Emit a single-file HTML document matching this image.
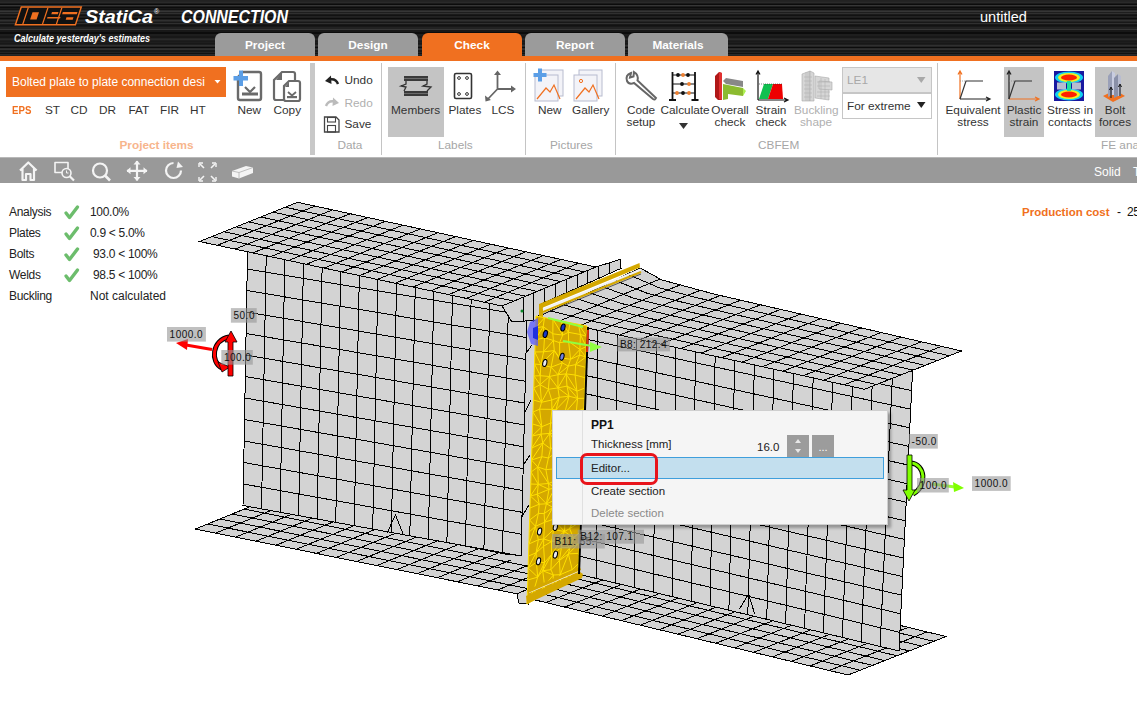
<!DOCTYPE html>
<html><head><meta charset="utf-8">
<style>
*{margin:0;padding:0;box-sizing:border-box}
html,body{width:1137px;height:711px;overflow:hidden;background:#fff;font-family:"Liberation Sans",sans-serif;position:relative}
.a{position:absolute;white-space:nowrap}
#hdr{left:0;top:0;width:1137px;height:56px;background:linear-gradient(180deg,#222222 0px,#222222 1px,#242424 1px,#242424 2px,#2a2a2a 2px,#2a2a2a 3px,#1a1a1a 3px,#1a1a1a 4px,#0c0c0c 4px,#0c0c0c 5px,#363636 5px,#363636 6px,#1e1e1e 6px,#1e1e1e 7px,#0c0c0c 7px,#0c0c0c 8px,#181818 8px,#181818 9px,#121212 9px,#121212 10px,#2a2a2a 10px,#2a2a2a 11px,#363636 11px,#363636 12px,#1e1e1e 12px,#1e1e1e 13px,#303030 13px,#303030 14px,#1a1a1a 14px,#1a1a1a 15px,#121212 15px,#121212 16px,#222222 16px,#222222 17px,#1e1e1e 17px,#1e1e1e 18px,#0c0c0c 18px,#0c0c0c 19px,#1e1e1e 19px,#1e1e1e 20px,#303030 20px,#303030 21px,#242424 21px,#242424 22px,#181818 22px,#181818 23px,#303030 23px,#303030 24px,#181818 24px,#181818 25px,#121212 25px,#121212 26px,#181818 26px,#181818 27px,#222222 27px,#222222 28px,#222222 28px,#222222 29px,#363636 29px,#363636 30px,#181818 30px,#181818 31px,#181818 31px,#181818 32px,#0c0c0c 32px,#0c0c0c 33px,#0c0c0c 33px,#0c0c0c 34px,#1e1e1e 34px,#1e1e1e 35px,#1e1e1e 35px,#1e1e1e 36px,#181818 36px,#181818 37px,#181818 37px,#181818 38px,#242424 38px,#242424 39px,#2a2a2a 39px,#2a2a2a 40px,#1e1e1e 40px,#1e1e1e 41px,#1a1a1a 41px,#1a1a1a 42px,#1e1e1e 42px,#1e1e1e 43px,#181818 43px,#181818 44px,#1e1e1e 44px,#1e1e1e 45px,#303030 45px,#303030 46px,#242424 46px,#242424 47px,#0c0c0c 47px,#0c0c0c 48px,#2a2a2a 48px,#2a2a2a 49px,#303030 49px,#303030 50px,#181818 50px,#181818 51px,#181818 51px,#181818 52px,#242424 52px,#242424 53px,#121212 53px,#121212 54px,#2a2a2a 54px,#2a2a2a 55px,#242424 55px,#242424 56px)}
#obar{left:0;top:56px;width:1137px;height:5px;background:#f07020}
.tab{top:33px;height:23px;width:100px;background:#9b9b9b;border-radius:6px 6px 0 0;color:#fff;font-weight:bold;font-size:11.8px;text-align:center;line-height:25px}
#rib{left:0;top:61px;width:1137px;height:96px;background:#fff}
#rbot{left:0;top:157px;width:1137px;height:1px;background:#b8b8b8;z-index:1}
#tb{left:0;top:157px;width:1137px;height:26px;background:#999}
.t{font-size:12.5px;color:#333;line-height:12px}
.c{text-align:center}
.grp{font-size:12.5px;color:#a6a6a6}
.sep{width:1px;background:#c4c4c4;top:63px;height:92px}
.info{font-size:12px;line-height:13px;color:#222;letter-spacing:-0.3px}
.hl{background:#c4c4c4}
.m{font-size:11.5px;line-height:13px;color:#222}
.r{font-size:11.8px;line-height:13px;color:#333}
</style></head><body>
<div id="hdr" class="a"></div>
<svg class="a" style="left:0;top:0" width="300" height="50">
 <polygon points="20.8,6.2 82.3,6.2 75.9,25.5 14.4,25.5" fill="#f07020"/>
 <polygon points="21.8,7.7 80.3,7.7 74.9,24.0 16.4,24.0" fill="#111"/>
 <polygon points="27.6,7.7 28.9,7.7 23.5,24.0 22.2,24.0" fill="#f07020"/>
 <polygon points="47.3,7.7 48.6,7.7 43.2,24.0 41.9,24.0" fill="#f07020"/>
 <polygon points="61.2,7.7 62.5,7.7 57.1,24.0 55.8,24.0" fill="#f07020"/>
 <polygon points="32.5,12.2 39.0,12.2 36.6,19.5 30.1,19.5" fill="#f07020"/>
 <polygon points="52.0,12.0 58.5,12.0 57.8,14.2 51.3,14.2" fill="#f07020"/>
 <polygon points="47.5,17.0 60.5,17.0 60.0,18.5 47.0,18.5" fill="#f07020"/>
 <polygon points="62.8,12.0 77.5,12.0 76.8,14.2 62.1,14.2" fill="#f07020"/>
 <polygon points="66.5,17.3 73.5,17.3 72.7,19.8 65.7,19.8" fill="#f07020"/>
 <text x="85" y="22.5" font-family="Liberation Sans" font-weight="bold" font-style="italic" font-size="18" fill="#fff" textLength="68" lengthAdjust="spacingAndGlyphs">StatiCa</text>
 <text x="154" y="14" font-family="Liberation Sans" font-size="7" fill="#fff">®</text>
 <text x="181" y="23" font-family="Liberation Sans" font-style="italic" font-weight="bold" font-size="18" fill="#fff" textLength="107" lengthAdjust="spacingAndGlyphs">CONNECTION</text>
 <text x="14" y="42" font-family="Liberation Sans" font-style="italic" font-weight="bold" font-size="10" fill="#fff" textLength="136" lengthAdjust="spacingAndGlyphs">Calculate yesterday's estimates</text>
</svg>
<div id="obar" class="a"></div>
<div class="a tab" style="left:215px">Project</div>
<div class="a tab" style="left:318px">Design</div>
<div class="a tab" style="left:422px;background:#f07020">Check</div>
<div class="a tab" style="left:525px">Report</div>
<div class="a tab" style="left:628px">Materials</div>
<div class="a" style="left:980px;top:8.5px;color:#fff;font-size:14.5px">untitled</div>

<div id="rib" class="a"></div>
<!-- group 1 -->
<div class="a" style="left:6px;top:67px;width:220px;height:30px;background:#f07020"></div>
<div class="a" style="left:12px;top:76px;font-size:12px;line-height:13px;color:#fff">Bolted plate to plate connection desi</div>
<svg class="a" style="left:214px;top:79px" width="8" height="6"><path d="M0.5,1 L6.5,1 L3.5,4.5Z" fill="#fff"/></svg>
<div class="a r" style="left:12px;top:104px;color:#f07020;font-weight:bold;transform:scaleX(0.82);transform-origin:left">EPS</div>
<div class="a r" style="left:45px;top:104px">ST</div>
<div class="a r" style="left:70.5px;top:104px">CD</div>
<div class="a r" style="left:99px;top:104px">DR</div>
<div class="a r" style="left:128.5px;top:104px">FAT</div>
<div class="a r" style="left:160px;top:104px">FIR</div>
<div class="a r" style="left:190px;top:104px">HT</div>
<div class="a r" style="left:119.5px;top:139px;color:#f7b58c;font-weight:bold">Project items</div>
<svg class="a" style="left:230px;top:68px" width="75" height="36">
 <path d="M13,4 L29,4 Q31,4 31,6 L31,30 Q31,32 29,32 L10,32 Q8,32 8,30 L8,9 Z" fill="#fff" stroke="#6a6a6a" stroke-width="2.4"/>
 <path d="M12,23.5 L16,20 M24,20 L28,23.5" stroke="none"/>
 <path d="M15,19 L20,24 L25,19" fill="none" stroke="#6a6a6a" stroke-width="2.2"/>
 <rect x="12" y="24.5" width="16" height="3" fill="#6a6a6a"/>
 <path d="M9,2.5 H13 V8 H18 V12.5 H13 V18 H9 V12.5 H3.5 V8 H9 Z" fill="#5b9ee6"/>
 <path d="M52,4 L63,4 Q65,4 65,6 L65,27 L55,27 L55,32 L46,32 Q44,32 44,30 L44,12 Z" fill="#fff" stroke="#6a6a6a" stroke-width="2.2"/>
 <path d="M46,12 L52,12 L52,4Z" fill="#6a6a6a"/>
 <path d="M59,13 L68,13 Q70,13 70,15 L70,31 Q70,33 68,33 L56,33 Q54,33 54,31 L54,18 Z" fill="#fff" stroke="#6a6a6a" stroke-width="2.2"/>
 <path d="M55,19 L59,19 L59,14Z" fill="#6a6a6a"/>
 <path d="M58,24 L62,27.5 L66,24" fill="none" stroke="#6a6a6a" stroke-width="1.8"/>
 <rect x="57" y="28" width="10" height="2.2" fill="#6a6a6a"/>
</svg>
<div class="a r" style="left:237.5px;top:104px">New</div>
<div class="a r" style="left:273.5px;top:104px">Copy</div>
<div class="a" style="left:310px;top:63px;width:5px;height:92px;background:#c8c8c8"></div>
<!-- group 2 data -->
<svg class="a" style="left:322px;top:72px" width="20" height="64">
 <path d="M16,12 Q14,6 7,7.5" fill="none" stroke="#222" stroke-width="2.4"/>
 <path d="M3,9 L9,3.5 L9.5,12Z" fill="#222"/>
 <path d="M4,34 Q6,28 13,29.5" fill="none" stroke="#bbb" stroke-width="2.4"/>
 <path d="M17,31 L11,25.5 L10.5,34Z" fill="#bbb"/>
 <path d="M2.5,45 H14 L17,48 V60 H2.5 Z" fill="none" stroke="#444" stroke-width="1.3"/>
 <rect x="5.5" y="45.5" width="8" height="4.5" fill="none" stroke="#444" stroke-width="1.1"/>
 <rect x="5.5" y="53.5" width="8" height="6.5" fill="none" stroke="#444" stroke-width="1.1"/>
</svg>
<div class="a r" style="left:344.5px;top:74px">Undo</div>
<div class="a r" style="left:344.5px;top:96.5px;color:#b0b0b0">Redo</div>
<div class="a r" style="left:344.5px;top:118px">Save</div>
<div class="a r grp" style="color:#a6a6a6;left:337.5px;top:139px">Data</div>
<div class="a sep" style="left:381px"></div>
<!-- group 3 labels -->
<div class="a hl" style="left:388px;top:67px;width:56px;height:70px"></div>
<svg class="a" style="left:396px;top:70px" width="125" height="34">
 <rect x="8" y="6" width="24" height="5" fill="#3a3a3a"/><line x1="8" y1="8.5" x2="32" y2="8.5" stroke="#777" stroke-width="0.8"/>
 <rect x="8" y="21" width="24" height="5" fill="#3a3a3a"/><line x1="8" y1="23.5" x2="32" y2="23.5" stroke="#777" stroke-width="0.8"/>
 <path d="M10,11 L10,14 L5,16 L10,17 L8,21" fill="none" stroke="#333" stroke-width="1.3"/>
 <path d="M31,11 L31,14 L27,16 L35,17 L31,21" fill="none" stroke="#333" stroke-width="1.3"/>
 <rect x="58.5" y="3.5" width="17" height="25" rx="1.5" fill="#fff" stroke="#333" stroke-width="1.6"/>
 <circle cx="63" cy="8" r="1.4" fill="none" stroke="#333" stroke-width="1"/><circle cx="71" cy="8" r="1.4" fill="none" stroke="#333" stroke-width="1"/>
 <circle cx="63" cy="24" r="1.4" fill="none" stroke="#333" stroke-width="1"/><circle cx="71" cy="24" r="1.4" fill="none" stroke="#333" stroke-width="1"/>
 <path d="M101.5,19 V4 M101.5,19 H117 M101.5,19 L91,30" stroke="#666" stroke-width="1.8" fill="none"/>
 <path d="M98,5 L101.5,0.5 L105,5Z M115,15.5 L120,19 L115,22.5Z M89,25.5 L89.5,31.5 L95,30Z" fill="#666"/>
</svg>
<div class="a r" style="left:391px;top:104px">Members</div>
<div class="a r" style="left:448.5px;top:104px">Plates</div>
<div class="a r" style="left:491.5px;top:104px">LCS</div>
<div class="a r grp" style="color:#a6a6a6;left:438px;top:139px">Labels</div>
<div class="a sep" style="left:524.5px"></div>
<!-- group 4 pictures -->
<svg class="a" style="left:532px;top:68px" width="78" height="36">
 <rect x="8" y="2" width="23" height="26" fill="#f3f3f8" stroke="#b8bccf" stroke-width="1"/>
 <rect x="3" y="7" width="23" height="26" fill="#f3f3f8" stroke="#b8bccf" stroke-width="1"/>
 <path d="M5,31 L14,20 L18,24 L22,17 L28,31" fill="none" stroke="#f07020" stroke-width="1.2"/>
 <path d="M6,0.5 H10 V5 H14.5 V9 H10 V13.5 H6 V9 H1.5 V5 H6 Z" fill="#5b9ee6"/>
 <rect x="47" y="2" width="23" height="26" fill="#f3f3f8" stroke="#b8bccf" stroke-width="1"/>
 <rect x="42" y="7" width="23" height="26" fill="#f3f3f8" stroke="#b8bccf" stroke-width="1"/>
 <path d="M44,31 L53,20 L57,24 L61,17 L67,31" fill="none" stroke="#f07020" stroke-width="1.2"/>
 <circle cx="49" cy="13" r="1.6" fill="none" stroke="#f07020" stroke-width="1"/>
</svg>
<div class="a r" style="left:538px;top:104px">New</div>
<div class="a r" style="left:572px;top:104px">Gallery</div>
<div class="a r grp" style="color:#a6a6a6;left:550px;top:139px">Pictures</div>
<div class="a sep" style="left:615px"></div>
<!-- group 5 cbfem -->
<svg class="a" style="left:622px;top:68px" width="215" height="36">
 <path d="M9,5 Q3,7 5,13 Q7,17 12,15 L31,31 Q33,32.5 34,30 L15.5,12.5 Q17,7 12,4 L11.5,8.5 L8,9.5 Z" fill="none" stroke="#666" stroke-width="2"/>
 <path d="M50.5,4 V32 M73,4 V32" stroke="#111" stroke-width="1.8"/>
 <path d="M47,32 H54 M69.5,32 H76.5" stroke="#111" stroke-width="2.2"/>
 <path d="M50.5,7 H73 M50.5,16 H73 M50.5,25 H73" stroke="#111" stroke-width="1.2"/>
 <circle cx="56" cy="7" r="1.9" fill="#111"/><circle cx="61" cy="7" r="1.9" fill="#f08030"/><circle cx="66" cy="7" r="1.9" fill="#111"/>
 <circle cx="60" cy="16" r="1.9" fill="#111"/><circle cx="67" cy="16" r="1.9" fill="#f08030"/>
 <circle cx="55" cy="25" r="1.9" fill="#f08030"/><circle cx="61" cy="25" r="1.9" fill="#111"/><circle cx="67" cy="25" r="1.9" fill="#f08030"/>
 <path d="M93,8 L97,4 L100,5 L100,32 L96,32 L93,29Z" fill="#b01818"/>
 <path d="M97,4 L100,5 L100,32 L97,31Z" fill="#e03030"/>
 <path d="M101,13 L104,10 L121,13 L121,19 L104,16Z" fill="#888"/>
 <path d="M101,16 L121,20 L121,28 L106,26 L106,31 L101,32Z" fill="#8cbb30"/>
 <path d="M121,20 L124,23 L121,28Z" fill="#aef050"/>
 <path d="M136,32 V4 M134,6.5 L136,3 L138,6.5" stroke="#111" stroke-width="1.2" fill="none"/>
 <path d="M136,32 H165 M162,30 L166,32 L162,34" stroke="#111" stroke-width="1.2" fill="none"/>
 <path d="M137,31 L142,16 L151,16 L146,31Z" fill="#10c050"/>
 <path d="M146,31 L151,16 L160,16 L161,31Z" fill="#ee0000"/>
 <line x1="137" y1="16" x2="160" y2="16" stroke="#333" stroke-width="0.6" stroke-dasharray="1,1"/>
 <g fill="#d6d6d6" stroke="#aaa" stroke-width="0.6">
 <path d="M180,6 L188,3 L188,33 L180,33Z"/><path d="M188,3 L192,5 L192,33 L188,33Z"/>
 <path d="M193,8 L207,10 L207,32 L193,30Z"/><path d="M197,13 L210,14 L210,22 L197,21Z"/>
 </g>
 <path d="M182,9 H190 M182,13 H190 M182,17 H190 M182,21 H190 M182,25 H190 M182,29 H190 M184,4 V33 M186,4 V33 M195,14 H208 M195,18 H208 M195,24 H208 M195,28 H208 M199,10 V31 M203,11 V31" stroke="#b4b4b4" stroke-width="0.6"/>
</svg>
<div class="a r c" style="left:621px;top:104px;width:40px">Code</div>
<div class="a r c" style="left:621px;top:116px;width:40px">setup</div>
<div class="a r" style="left:660.5px;top:104px">Calculate</div>
<svg class="a" style="left:679px;top:123px" width="10" height="7"><path d="M0,0 H9 L4.5,6Z" fill="#333"/></svg>
<div class="a r c" style="left:710px;top:104px;width:40px">Overall</div>
<div class="a r c" style="left:710px;top:116px;width:40px">check</div>
<div class="a r c" style="left:751px;top:104px;width:40px">Strain</div>
<div class="a r c" style="left:751px;top:116px;width:40px">check</div>
<div class="a r c" style="left:794px;top:104px;width:44px;color:#b0b0b0">Buckling</div>
<div class="a r c" style="left:794px;top:116px;width:44px;color:#b0b0b0">shape</div>
<div class="a" style="left:842px;top:67px;width:90px;height:26px;background:#e6e6e6;border:1px solid #c6c6c6"></div>
<div class="a r" style="left:847px;top:74px;color:#a8a8a8">LE1</div>
<svg class="a" style="left:917px;top:77px" width="9" height="7"><path d="M0,0 H8.5 L4.25,6Z" fill="#a8a8a8"/></svg>
<div class="a" style="left:842px;top:93px;width:90px;height:26px;background:#fff;border:1px solid #c6c6c6"></div>
<div class="a r" style="left:847px;top:100px">For extreme</div>
<svg class="a" style="left:917px;top:102px" width="9" height="7"><path d="M0,0 H8.5 L4.25,6Z" fill="#222"/></svg>
<div class="a r grp" style="color:#a6a6a6;left:758px;top:139px">CBFEM</div>
<div class="a sep" style="left:936.5px"></div>
<!-- group 6 FE -->
<div class="a hl" style="left:1004px;top:67px;width:40px;height:70px"></div>
<div class="a hl" style="left:1095px;top:67px;width:42px;height:70px"></div>
<svg class="a" style="left:950px;top:68px" width="187" height="36">
 <path d="M10,31 V4 M8,6.5 L10,3 L12,6.5" stroke="#f07020" stroke-width="1.2" fill="none"/>
 <path d="M10,31 H39 M36,29 L40,31 L36,33" stroke="#222" stroke-width="1.2" fill="none"/>
 <path d="M10,31 L16,13 H33" stroke="#333" stroke-width="1.2" fill="none"/>
 <line x1="10" y1="13" x2="16" y2="13" stroke="#888" stroke-width="0.7" stroke-dasharray="1,1"/>
 <path d="M59,31 V4 M57,6.5 L59,3 L61,6.5" stroke="#222" stroke-width="1.2" fill="none"/>
 <path d="M59,31 H88 M85,29 L89,31 L85,33" stroke="#f07020" stroke-width="1.2" fill="none"/>
 <path d="M59,31 L65,13 H82" stroke="#333" stroke-width="1.2" fill="none"/>
 <line x1="59" y1="13" x2="65" y2="13" stroke="#888" stroke-width="0.7" stroke-dasharray="1,1"/>
 <rect x="104" y="3" width="30" height="30" fill="#1818a0"/>
 <ellipse cx="119" cy="9.5" rx="14" ry="6" fill="#10d0f0"/><ellipse cx="119" cy="9.5" rx="11" ry="4.5" fill="#f0f020"/><ellipse cx="119" cy="9.5" rx="8" ry="3" fill="#ff2000"/>
 <ellipse cx="119" cy="26.5" rx="14" ry="6" fill="#10d0f0"/><ellipse cx="119" cy="26.5" rx="11" ry="4.5" fill="#f0f020"/><ellipse cx="119" cy="26.5" rx="8" ry="3" fill="#ff2000"/>
 <rect x="107" y="14.5" width="9" height="7" fill="#b8bcd0"/><rect x="122" y="14.5" width="9" height="7" fill="#b8bcd0"/>
 <rect x="117" y="13" width="4" height="10" fill="#20e0a0"/>
 <path d="M153,28 L165,22 L175,28 L163,34Z" fill="#f07020"/>
 <path d="M158,8 L162,3 L162,27 L158,29Z" fill="#9aa0b8"/><path d="M162,3 L165,5 L165,27 L162,27Z" fill="#c8cce0"/>
 <path d="M164,10 L168,6 L168,28 L164,30Z" fill="#8a90a8"/><path d="M168,6 L171,8 L171,28 L168,28Z" fill="#b8bcd0"/>
 <path d="M161,30 V20 M159.5,22 L161,19 L162.5,22 M170,28 V17 M168.5,19 L170,16 L171.5,19" stroke="#111" stroke-width="1" fill="none"/>
</svg>
<div class="a r c" style="left:943px;top:104px;width:60px">Equivalent</div>
<div class="a r c" style="left:943px;top:116px;width:60px">stress</div>
<div class="a r c" style="left:999px;top:104px;width:50px">Plastic</div>
<div class="a r c" style="left:999px;top:116px;width:50px">strain</div>
<div class="a r c" style="left:1044px;top:104px;width:52px">Stress in</div>
<div class="a r c" style="left:1044px;top:116px;width:52px">contacts</div>
<div class="a r c" style="left:1094px;top:104px;width:42px">Bolt</div>
<div class="a r c" style="left:1094px;top:116px;width:42px">forces</div>
<div class="a r grp" style="color:#a6a6a6;left:1101px;top:139px">FE anal</div>

<div id="rbot" class="a"></div>
<div id="tb" class="a"></div>
<svg class="a" style="left:0;top:157px" width="300" height="26">
 <g fill="none" stroke="#f4f4f4" stroke-width="2.2" stroke-linejoin="round">
  <path d="M20,13.5 L28.3,5.5 L36.6,13.5 M22.5,11.5 V23 H26 V17 H30.5 V23 H34 V11.5"/>
  <rect x="55" y="5.5" width="13" height="10" stroke-width="1.6"/>
  <circle cx="100" cy="13.5" r="7" />
  <path d="M105,18.5 L110,23.5" stroke-width="2.6"/>
  <path d="M137,4 V23.5 M127,13.8 H147"/>
  <path d="M173.5,6 A7.5,7.5 0 1 0 181,13.5"/>
  <path d="M200,7 L204,11 M215,7 L211,11 M200,23 L204,19 M215,23 L211,19" stroke-width="1.6"/>
 </g>
 <circle cx="66.5" cy="16" r="4.5" fill="#999" stroke="#f4f4f4" stroke-width="1.6"/>
 <path d="M66.5,13.5 V16 H68.5" stroke="#f4f4f4" stroke-width="1" fill="none"/>
 <path d="M69.5,19 L74,23.5" stroke="#f4f4f4" stroke-width="2.2"/>
 <path d="M133.5,7.5 L137,3.5 L140.5,7.5Z M133.5,20 L137,24 L140.5,20Z M130.5,10.3 L126.5,13.8 L130.5,17.3Z M143.5,10.3 L147.5,13.8 L143.5,17.3Z" fill="#f4f4f4"/>
 <path d="M178,4.5 L183,10 L176.5,11Z" fill="#f4f4f4"/>
 <path d="M199,6 H203 M199,6 V10 M216,6 H212 M216,6 V10 M199,24 H203 M199,24 V20 M216,24 H212 M216,24 V20" stroke="#f4f4f4" stroke-width="1.4" fill="none"/>
 <path d="M232,14 L246,9 L253,10.5 L253,16 L239,21.5 L232,19.5Z" fill="#f4f4f4"/>
 <path d="M232,14 L239,15.5 L253,10.5 M239,15.5 V21.5" stroke="#b0b0b0" stroke-width="0.8" fill="none"/>
</svg>
<div class="a" style="left:1094px;top:164.5px;font-size:12px;line-height:14px;color:#fff">Solid</div>
<div class="a" style="left:1133px;top:164.5px;font-size:12px;line-height:14px;color:#fff">T</div>

<svg class="a" style="left:0;top:0" width="1137" height="711" shape-rendering="crispEdges">
<polygon points="195.4,529.0 518.0,594.0 616.0,554.0 293.4,489.0" fill="#d3d3d3" stroke="#000" stroke-width="1"/>
<path d="M215.6,533.1L313.6,493.1M235.7,537.1L333.7,497.1M255.9,541.2L353.9,501.2M276.1,545.2L374.0,505.2M296.2,549.3L394.2,509.3M316.4,553.4L414.4,513.4M336.5,557.4L434.5,517.4M356.7,561.5L454.7,521.5M376.9,565.6L474.9,525.6M397.0,569.6L495.0,529.6M417.2,573.7L515.2,533.7M437.4,577.8L535.4,537.8M457.5,581.8L555.5,541.8M477.7,585.9L575.7,545.9M497.8,589.9L595.8,549.9M207.7,524.0L530.2,589.0M219.9,519.0L542.5,584.0M232.1,514.0L554.8,579.0M244.4,509.0L567.0,574.0M256.6,504.0L579.2,569.0M268.9,499.0L591.5,564.0M281.1,494.0L603.8,559.0" stroke="#000" stroke-width="1" fill="none"/>
<polygon points="527.0,598.0 848.0,675.0 946.0,636.5 625.0,559.0" fill="#d3d3d3" stroke="#000" stroke-width="1"/>
<path d="M545.9,602.5L643.9,563.6M564.8,607.1L662.8,568.1M583.6,611.6L681.6,572.7M602.5,616.1L700.5,577.2M621.4,620.6L719.4,581.8M640.3,625.2L738.3,586.4M659.2,629.7L757.2,590.9M678.1,634.2L776.1,595.5M696.9,638.8L794.9,600.0M715.8,643.3L813.8,604.6M734.7,647.8L832.7,609.1M753.6,652.4L851.6,613.7M772.5,656.9L870.5,618.3M791.4,661.4L889.4,622.8M810.2,665.9L908.2,627.4M829.1,670.5L927.1,631.9M539.2,593.1L860.2,670.2M551.5,588.2L872.5,665.4M563.8,583.4L884.8,660.6M576.0,578.5L897.0,655.8M588.2,573.6L909.2,650.9M600.5,568.8L921.5,646.1M612.8,563.9L933.8,641.3" stroke="#000" stroke-width="1" fill="none"/>
<polygon points="510,290 542,282 533,560 510,560" fill="#d3d3d3"/>
<path d="M522,300 L533,318 M521,360 L532,345 M521,420 L531,400 M520,470 L530,455 M520,520 L529,505" stroke="#000" stroke-width="1"/>
<polygon points="248.0,226.0 528.0,272.0 521.0,556.0 243.0,505.5" fill="#d3d3d3" stroke="#000" stroke-width="1"/>
<path d="M266.7,229.1L261.5,508.9M285.3,232.1L280.1,512.2M304.0,235.2L298.6,515.6M322.7,238.3L317.1,519.0M341.3,241.3L335.7,522.3M360.0,244.4L354.2,525.7M378.7,247.5L372.7,529.1M397.3,250.5L391.3,532.4M416.0,253.6L409.8,535.8M434.7,256.7L428.3,539.2M453.3,259.7L446.9,542.5M472.0,262.8L465.4,545.9M490.7,265.9L483.9,549.3M509.3,268.9L502.5,552.6M247.6,247.5L527.5,293.8M247.2,269.0L526.9,315.7M246.8,290.5L526.4,337.5M246.5,312.0L525.8,359.4M246.1,333.5L525.3,381.2M245.7,355.0L524.8,403.1M245.3,376.5L524.2,424.9M244.9,398.0L523.7,446.8M244.5,419.5L523.2,468.6M244.2,441.0L522.6,490.5M243.8,462.5L522.1,512.3M243.4,484.0L521.5,534.2" stroke="#000" stroke-width="1" fill="none"/>
<polygon points="517,594 528,589 528,604 519,603" fill="#d3d3d3" stroke="#000" stroke-width="1"/>
<polygon points="578.0,301.0 912.5,372.0 899.0,651.0 577.7,574.0" fill="#d3d3d3" stroke="#000" stroke-width="1"/>
<path d="M597.7,305.2L596.6,578.5M617.4,309.4L615.5,583.1M637.0,313.5L634.4,587.6M656.7,317.7L653.3,592.1M676.4,321.9L672.2,596.6M696.1,326.1L691.1,601.2M715.7,330.2L710.0,605.7M735.4,334.4L728.9,610.2M755.1,338.6L747.8,614.8M774.8,342.8L766.7,619.3M794.4,346.9L785.6,623.8M814.1,351.1L804.5,628.4M833.8,355.3L823.4,632.9M853.5,359.5L842.3,637.4M873.1,363.6L861.2,641.9M892.8,367.8L880.1,646.5M578.0,319.2L911.6,390.6M578.0,337.4L910.7,409.2M577.9,355.6L909.8,427.8M577.9,373.8L908.9,446.4M577.9,392.0L908.0,465.0M577.9,410.2L907.1,483.6M577.9,428.4L906.2,502.2M577.8,446.6L905.3,520.8M577.8,464.8L904.4,539.4M577.8,483.0L903.5,558.0M577.8,501.2L902.6,576.6M577.8,519.4L901.7,595.2M577.7,537.6L900.8,613.8M577.7,555.8L899.9,632.4" stroke="#000" stroke-width="1" fill="none"/>
<polygon points="502,306 596,267 620,259.4 621,268.4 541,304 538,320 512,322" fill="#d3d3d3" stroke="#000" stroke-width="1"/><path d="M523.0,297.3L523.0,322.0M533.8,292.8L533.8,322.0M544.6,288.3L544.6,302.4M555.4,283.8L555.4,297.7M566.2,279.4L566.2,292.9M577.0,274.9L577.0,288.2M587.8,270.4L587.8,283.4M598.6,266.2L598.6,278.7M609.4,262.8L609.4,273.9M620.2,259.3L620.2,269.2" stroke="#000" stroke-width="1"/>
<path d="M387.4,532.6 L395.4,514.8 L403.3,534.5 M739.3,609.3 L748.5,593.9 L754.7,613.9" stroke="#000" stroke-width="1" fill="none"/>
<polygon points="199.5,241.5 502.0,306.0 596.0,267.0 297.5,202.3" fill="#d3d3d3" stroke="#000" stroke-width="1"/>
<path d="M217.3,245.3L315.1,206.1M235.1,249.1L332.6,209.9M252.9,252.9L350.2,213.7M270.7,256.7L367.7,217.5M288.5,260.5L385.3,221.3M306.3,264.3L402.9,225.1M324.1,268.1L420.4,228.9M341.9,271.9L438.0,232.7M359.6,275.6L455.5,236.6M377.4,279.4L473.1,240.4M395.2,283.2L490.6,244.2M413.0,287.0L508.2,248.0M430.8,290.8L525.8,251.8M448.6,294.6L543.3,255.6M466.4,298.4L560.9,259.4M484.2,302.2L578.4,263.2M211.8,236.6L513.8,301.1M224.0,231.7L525.5,296.2M236.2,226.8L537.2,291.4M248.5,221.9L549.0,286.5M260.8,217.0L560.8,281.6M273.0,212.1L572.5,276.8M285.2,207.2L584.2,271.9" stroke="#000" stroke-width="1" fill="none"/>
<polygon points="538.0,317.0 543.4,318.2 548.9,319.4 554.3,320.6 559.8,321.8 565.2,323.0 570.6,324.2 576.1,325.4 581.5,326.6 587.0,327.8 592.4,329.1 597.9,330.3 603.3,331.5 608.7,332.7 614.2,333.9 619.6,335.1 625.1,336.3 630.5,337.5 636.0,338.7 641.4,339.9 646.8,341.1 652.3,342.3 657.7,343.5 663.2,344.7 668.6,345.9 674.0,347.1 679.5,348.3 684.9,349.5 690.4,350.7 695.8,351.9 701.2,353.1 706.7,354.4 712.1,355.6 717.6,356.8 723.0,358.0 728.5,359.2 733.9,360.4 739.3,361.6 744.8,362.8 750.2,364.0 755.7,365.2 761.1,366.4 766.5,367.6 772.0,368.8 777.4,370.0 782.9,371.2 788.3,372.4 793.8,373.6 799.2,374.8 804.6,376.0 810.1,377.2 815.5,378.5 821.0,379.7 826.4,380.9 831.9,382.1 837.3,383.3 842.7,384.5 848.2,385.7 853.6,386.9 859.1,388.1 864.5,389.3 961.5,351.0 956.1,349.8 950.8,348.5 945.4,347.3 940.1,346.1 934.7,344.8 929.4,343.6 924.0,342.4 918.6,341.1 913.3,339.9 907.9,338.7 902.6,337.4 897.2,336.2 891.8,335.0 886.5,333.7 881.1,332.5 875.8,331.3 870.4,330.0 865.0,328.8 859.7,327.6 854.3,326.3 849.0,325.1 843.6,323.9 838.3,322.7 832.9,321.4 827.5,320.2 822.2,319.0 816.8,317.7 811.5,316.5 806.1,315.3 800.8,314.0 795.4,312.8 790.0,311.6 784.7,310.3 779.3,309.1 774.0,307.9 768.6,306.6 763.2,305.4 757.9,304.2 752.5,302.9 747.2,301.7 741.8,300.5 736.5,299.2 731.1,298.0 725.7,296.8 720.4,295.5 715.0,294.3 709.7,292.9 704.3,291.4 698.9,290.0 693.6,288.5 688.2,287.1 682.9,285.6 677.5,284.2 672.1,282.7 666.8,281.3 661.4,279.7 656.1,276.8 650.7,273.8 645.4,270.9 640.0,268.0" fill="#d3d3d3" stroke="#000" stroke-width="1"/>
<path d="M558.4,321.5L660.1,279.0M578.8,326.0L680.2,284.9M599.2,330.6L700.3,290.3M619.6,335.1L720.4,295.5M640.0,339.6L740.5,300.2M660.4,344.1L760.6,304.8M680.8,348.6L780.7,309.4M701.2,353.1L800.8,314.0M721.7,357.7L820.8,318.6M742.1,362.2L840.9,323.3M762.5,366.7L861.0,327.9M782.9,371.2L881.1,332.5M803.3,375.7L901.2,337.1M823.7,380.3L921.3,341.8M844.1,384.8L941.4,346.4M550.8,310.9L583.3,319.0L615.9,326.5L648.5,333.8L681.1,341.0L713.7,348.3L746.3,355.5L778.9,362.8L811.5,370.0L844.0,377.3L876.6,384.5M563.5,304.8L596.0,313.9L628.5,321.4L661.1,328.8L693.6,336.1L726.1,343.4L758.6,350.6L791.2,357.9L823.7,365.2L856.2,372.5L888.8,379.7M576.2,298.6L608.7,308.7L641.2,316.4L673.6,323.9L706.1,331.2L738.6,338.5L771.0,345.8L803.5,353.1L836.0,360.4L868.4,367.6L900.9,374.9M589.0,292.5L621.4,303.5L653.8,311.4L686.2,319.0L718.6,326.3L751.0,333.6L783.4,340.9L815.8,348.2L848.2,355.5L880.6,362.8L913.0,370.1M601.8,286.4L634.1,298.3L666.4,306.4L698.8,314.0L731.1,321.4L763.4,328.7L795.8,336.0L828.1,343.4L860.5,350.7L892.8,358.0L925.1,365.4M614.5,280.2L646.8,293.1L679.0,301.4L711.3,309.1L743.6,316.5L775.9,323.8L808.1,331.2L840.4,338.5L872.7,345.9L905.0,353.2L937.2,360.6M627.2,274.1L659.5,287.9L691.7,296.4L723.9,304.2L756.1,311.5L788.3,318.9L820.5,326.3L852.7,333.7L885.0,341.0L917.2,348.4L949.4,355.8" stroke="#000" stroke-width="1" fill="none"/>
</svg>
<svg class="a" style="left:0;top:0" width="1137" height="711">
<g shape-rendering="auto">
<polygon points="539,322 539,304 639.5,263 640,267.5 543,307.5 543,322" fill="#d4a800"/>
<line x1="543" y1="309.5" x2="641" y2="269.5" stroke="#f2f2f2" stroke-width="2"/>
<line x1="543" y1="312" x2="641" y2="272" stroke="#d4a800" stroke-width="2"/>
<line x1="543" y1="314" x2="641" y2="274" stroke="#333" stroke-width="0.8"/>
<polygon points="536.0,316.0 587.0,326.0 578.0,574.0 527.0,604.0" fill="#d4a800"/>
<path d="M536.0,316.0L544.5,317.7M536.0,316.0L535.6,328.0M544.5,317.7L535.6,328.0M535.6,328.0L543.2,326.6M535.6,328.0L535.2,340.0M543.2,326.6L535.2,340.0M535.2,340.0L544.5,337.7M535.2,340.0L534.9,352.0M534.9,352.0L543.6,351.8M534.9,352.0L534.5,364.0M534.9,352.0L540.8,364.6M534.5,364.0L540.8,364.6M534.5,364.0L534.1,376.0M534.5,364.0L540.3,375.7M534.1,376.0L540.3,375.7M534.1,376.0L533.8,388.0M534.1,376.0L540.1,384.7M533.8,388.0L540.1,384.7M533.8,388.0L533.4,400.0M533.8,388.0L541.5,402.3M533.4,400.0L541.5,402.3M533.4,400.0L533.0,412.0M533.0,412.0L539.6,409.2M533.0,412.0L532.6,424.0M533.0,412.0L541.8,426.7M532.6,424.0L541.8,426.7M532.6,424.0L532.2,436.0M541.8,426.7L532.2,436.0M532.2,436.0L541.1,434.1M532.2,436.0L531.9,448.0M541.1,434.1L531.9,448.0M531.9,448.0L542.8,443.0M531.9,448.0L531.5,460.0M542.8,443.0L531.5,460.0M531.5,460.0L541.8,456.7M531.5,460.0L531.1,472.0M531.5,460.0L537.8,467.0M531.1,472.0L537.8,467.0M531.1,472.0L530.8,484.0M531.1,472.0L538.3,484.3M530.8,484.0L538.3,484.3M530.8,484.0L530.4,496.0M538.3,484.3L530.4,496.0M530.4,496.0L537.3,494.2M530.4,496.0L530.0,508.0M530.4,496.0L539.2,504.2M530.0,508.0L539.2,504.2M530.0,508.0L529.6,520.0M529.6,520.0L538.4,513.4M529.6,520.0L529.2,532.0M529.6,520.0L535.5,526.3M529.2,532.0L535.5,526.3M529.2,532.0L528.9,544.0M535.5,526.3L528.9,544.0M528.9,544.0L538.3,539.8M528.9,544.0L528.5,556.0M528.5,556.0L536.1,552.8M528.5,556.0L528.1,568.0M536.1,552.8L528.1,568.0M528.1,568.0L536.4,562.2M528.1,568.0L527.8,580.0M528.1,568.0L537.7,577.1M527.8,580.0L537.7,577.1M527.8,580.0L527.4,592.0M527.4,592.0L534.6,587.9M527.4,592.0L527.0,604.0M534.6,587.9L527.0,604.0M527.0,604.0L535.5,599.0M544.5,317.7L553.0,319.3M544.5,317.7L543.2,326.6M543.2,326.6L552.8,333.8M543.2,326.6L544.5,337.7M544.5,337.7L553.4,340.5M544.5,337.7L543.6,351.8M553.4,340.5L543.6,351.8M543.6,351.8L554.3,350.6M543.6,351.8L540.8,364.6M554.3,350.6L540.8,364.6M540.8,364.6L551.1,367.2M540.8,364.6L540.3,375.7M540.3,375.7L549.4,376.5M540.3,375.7L540.1,384.7M549.4,376.5L540.1,384.7M540.1,384.7L548.4,389.3M540.1,384.7L541.5,402.3M548.4,389.3L541.5,402.3M541.5,402.3L551.7,400.0M541.5,402.3L539.6,409.2M539.6,409.2L551.9,409.4M539.6,409.2L541.8,426.7M541.8,426.7L550.6,423.1M541.8,426.7L541.1,434.1M541.1,434.1L549.6,433.4M541.1,434.1L542.8,443.0M549.6,433.4L542.8,443.0M542.8,443.0L550.6,448.8M542.8,443.0L541.8,456.7M541.8,456.7L548.4,458.0M541.8,456.7L537.8,467.0M537.8,467.0L545.9,469.7M537.8,467.0L538.3,484.3M537.8,467.0L548.5,483.5M538.3,484.3L548.5,483.5M538.3,484.3L537.3,494.2M538.3,484.3L549.0,489.3M537.3,494.2L549.0,489.3M537.3,494.2L539.2,504.2M537.3,494.2L546.4,503.8M539.2,504.2L546.4,503.8M539.2,504.2L538.4,513.4M538.4,513.4L544.2,513.6M538.4,513.4L535.5,526.3M535.5,526.3L544.6,522.3M535.5,526.3L538.3,539.8M538.3,539.8L543.7,538.9M538.3,539.8L536.1,552.8M543.7,538.9L536.1,552.8M536.1,552.8L543.6,546.2M536.1,552.8L536.4,562.2M536.4,562.2L544.6,562.6M536.4,562.2L537.7,577.1M544.6,562.6L537.7,577.1M537.7,577.1L542.7,570.7M537.7,577.1L534.6,587.9M534.6,587.9L544.6,585.6M534.6,587.9L535.5,599.0M544.6,585.6L535.5,599.0M535.5,599.0L544.0,594.0M553.0,319.3L561.5,321.0M553.0,319.3L552.8,333.8M553.0,319.3L562.7,335.1M552.8,333.8L562.7,335.1M552.8,333.8L553.4,340.5M553.4,340.5L559.6,342.7M553.4,340.5L554.3,350.6M554.3,350.6L559.7,357.6M554.3,350.6L551.1,367.2M554.3,350.6L562.3,362.9M551.1,367.2L562.3,362.9M551.1,367.2L549.4,376.5M551.1,367.2L558.0,374.7M549.4,376.5L558.0,374.7M549.4,376.5L548.4,389.3M549.4,376.5L557.9,387.9M548.4,389.3L557.9,387.9M548.4,389.3L551.7,400.0M551.7,400.0L559.3,397.3M551.7,400.0L551.9,409.4M559.3,397.3L551.9,409.4M551.9,409.4L556.0,409.7M551.9,409.4L550.6,423.1M551.9,409.4L557.5,422.0M550.6,423.1L557.5,422.0M550.6,423.1L549.6,433.4M557.5,422.0L549.6,433.4M549.6,433.4L560.0,434.2M549.6,433.4L550.6,448.8M549.6,433.4L557.5,444.8M550.6,448.8L557.5,444.8M550.6,448.8L548.4,458.0M548.4,458.0L557.9,451.4M548.4,458.0L545.9,469.7M545.9,469.7L558.6,468.4M545.9,469.7L548.5,483.5M548.5,483.5L558.1,479.7M548.5,483.5L549.0,489.3M548.5,483.5L555.3,487.7M549.0,489.3L555.3,487.7M549.0,489.3L546.4,503.8M555.3,487.7L546.4,503.8M546.4,503.8L553.5,500.7M546.4,503.8L544.2,513.6M546.4,503.8L552.9,507.4M544.2,513.6L552.9,507.4M544.2,513.6L544.6,522.3M552.9,507.4L544.6,522.3M544.6,522.3L553.3,519.3M544.6,522.3L543.7,538.9M543.7,538.9L553.6,529.6M543.7,538.9L543.6,546.2M543.7,538.9L551.5,541.5M543.6,546.2L551.5,541.5M543.6,546.2L544.6,562.6M544.6,562.6L551.6,554.4M544.6,562.6L542.7,570.7M551.6,554.4L542.7,570.7M542.7,570.7L550.9,569.7M542.7,570.7L544.6,585.6M542.7,570.7L553.4,575.0M544.6,585.6L553.4,575.0M544.6,585.6L544.0,594.0M544.0,594.0L552.5,589.0M561.5,321.0L570.0,322.7M561.5,321.0L562.7,335.1M561.5,321.0L568.4,332.3M562.7,335.1L568.4,332.3M562.7,335.1L559.6,342.7M559.6,342.7L568.6,341.4M559.6,342.7L559.7,357.6M559.7,357.6L570.6,359.3M559.7,357.6L562.3,362.9M562.3,362.9L568.3,366.1M562.3,362.9L558.0,374.7M568.3,366.1L558.0,374.7M558.0,374.7L566.1,373.9M558.0,374.7L557.9,387.9M566.1,373.9L557.9,387.9M557.9,387.9L567.0,386.1M557.9,387.9L559.3,397.3M557.9,387.9L569.0,396.2M559.3,397.3L569.0,396.2M559.3,397.3L556.0,409.7M569.0,396.2L556.0,409.7M556.0,409.7L564.6,413.4M556.0,409.7L557.5,422.0M556.0,409.7L566.8,417.8M557.5,422.0L566.8,417.8M557.5,422.0L560.0,434.2M557.5,422.0L566.5,427.8M560.0,434.2L566.5,427.8M560.0,434.2L557.5,444.8M560.0,434.2L566.0,446.3M557.5,444.8L566.0,446.3M557.5,444.8L557.9,451.4M557.5,444.8L567.3,454.9M557.9,451.4L567.3,454.9M557.9,451.4L558.6,468.4M557.9,451.4L563.9,463.2M558.6,468.4L563.9,463.2M558.6,468.4L558.1,479.7M558.1,479.7L563.1,477.3M558.1,479.7L555.3,487.7M563.1,477.3L555.3,487.7M555.3,487.7L564.5,488.2M555.3,487.7L553.5,500.7M555.3,487.7L563.1,494.7M553.5,500.7L563.1,494.7M553.5,500.7L552.9,507.4M553.5,500.7L565.2,511.7M552.9,507.4L565.2,511.7M552.9,507.4L553.3,519.3M565.2,511.7L553.3,519.3M553.3,519.3L565.0,521.1M553.3,519.3L553.6,529.6M553.3,519.3L564.5,531.5M553.6,529.6L564.5,531.5M553.6,529.6L551.5,541.5M564.5,531.5L551.5,541.5M551.5,541.5L561.1,540.6M551.5,541.5L551.6,554.4M561.1,540.6L551.6,554.4M551.6,554.4L561.4,547.6M551.6,554.4L550.9,569.7M551.6,554.4L559.4,560.5M550.9,569.7L559.4,560.5M550.9,569.7L553.4,575.0M553.4,575.0L560.2,574.7M553.4,575.0L552.5,589.0M560.2,574.7L552.5,589.0M552.5,589.0L561.0,584.0M570.0,322.7L578.5,324.3M570.0,322.7L568.4,332.3M568.4,332.3L580.4,334.5M568.4,332.3L568.6,341.4M568.6,341.4L579.9,349.5M568.6,341.4L570.6,359.3M579.9,349.5L570.6,359.3M570.6,359.3L579.7,355.1M570.6,359.3L568.3,366.1M568.3,366.1L575.6,364.6M568.3,366.1L566.1,373.9M566.1,373.9L575.1,375.0M566.1,373.9L567.0,386.1M566.1,373.9L576.9,391.2M567.0,386.1L576.9,391.2M567.0,386.1L569.0,396.2M567.0,386.1L577.6,398.4M569.0,396.2L577.6,398.4M569.0,396.2L564.6,413.4M577.6,398.4L564.6,413.4M564.6,413.4L576.3,411.6M564.6,413.4L566.8,417.8M564.6,413.4L573.0,421.1M566.8,417.8L573.0,421.1M566.8,417.8L566.5,427.8M573.0,421.1L566.5,427.8M566.5,427.8L576.8,432.7M566.5,427.8L566.0,446.3M566.0,446.3L575.6,440.9M566.0,446.3L567.3,454.9M567.3,454.9L572.4,454.0M567.3,454.9L563.9,463.2M567.3,454.9L572.8,464.7M563.9,463.2L572.8,464.7M563.9,463.2L563.1,477.3M563.9,463.2L575.6,472.1M563.1,477.3L575.6,472.1M563.1,477.3L564.5,488.2M563.1,477.3L572.4,487.1M564.5,488.2L572.4,487.1M564.5,488.2L563.1,494.7M572.4,487.1L563.1,494.7M563.1,494.7L573.6,491.5M563.1,494.7L565.2,511.7M565.2,511.7L570.3,501.9M565.2,511.7L565.0,521.1M565.2,511.7L573.8,517.8M565.0,521.1L573.8,517.8M565.0,521.1L564.5,531.5M564.5,531.5L569.6,528.6M564.5,531.5L561.1,540.6M564.5,531.5L573.4,537.8M561.1,540.6L573.4,537.8M561.1,540.6L561.4,547.6M561.1,540.6L569.9,547.6M561.4,547.6L569.9,547.6M561.4,547.6L559.4,560.5M569.9,547.6L559.4,560.5M559.4,560.5L568.4,553.9M559.4,560.5L560.2,574.7M568.4,553.9L560.2,574.7M560.2,574.7L572.2,569.6M560.2,574.7L561.0,584.0M560.2,574.7L569.5,579.0M561.0,584.0L569.5,579.0M578.5,324.3L587.0,326.0M578.5,324.3L580.4,334.5M578.5,324.3L586.6,336.3M580.4,334.5L586.6,336.3M580.4,334.5L579.9,349.5M580.4,334.5L586.2,346.7M579.9,349.5L586.2,346.7M579.9,349.5L579.7,355.1M579.9,349.5L585.9,357.0M579.7,355.1L585.9,357.0M579.7,355.1L575.6,364.6M585.9,357.0L575.6,364.6M575.6,364.6L585.5,367.3M575.6,364.6L575.1,375.0M575.1,375.0L585.1,377.7M575.1,375.0L576.9,391.2M576.9,391.2L584.8,388.0M576.9,391.2L577.6,398.4M577.6,398.4L584.4,398.3M577.6,398.4L576.3,411.6M576.3,411.6L584.0,408.7M576.3,411.6L573.0,421.1M576.3,411.6L583.6,419.0M573.0,421.1L583.6,419.0M573.0,421.1L576.8,432.7M576.8,432.7L583.2,429.3M576.8,432.7L575.6,440.9M583.2,429.3L575.6,440.9M575.6,440.9L582.9,439.7M575.6,440.9L572.4,454.0M572.4,454.0L582.5,450.0M572.4,454.0L572.8,464.7M582.5,450.0L572.8,464.7M572.8,464.7L582.1,460.3M572.8,464.7L575.6,472.1M575.6,472.1L581.8,470.7M575.6,472.1L572.4,487.1M572.4,487.1L581.4,481.0M572.4,487.1L573.6,491.5M573.6,491.5L581.0,491.3M573.6,491.5L570.3,501.9M570.3,501.9L580.6,501.7M570.3,501.9L573.8,517.8M580.6,501.7L573.8,517.8M573.8,517.8L580.2,512.0M573.8,517.8L569.6,528.6M580.2,512.0L569.6,528.6M569.6,528.6L579.9,522.3M569.6,528.6L573.4,537.8M573.4,537.8L579.5,532.7M573.4,537.8L569.9,547.6M569.9,547.6L579.1,543.0M569.9,547.6L568.4,553.9M579.1,543.0L568.4,553.9M568.4,553.9L578.8,553.3M568.4,553.9L572.2,569.6M572.2,569.6L578.4,563.7M572.2,569.6L569.5,579.0M569.5,579.0L578.0,574.0M587.0,326.0L586.6,336.3M586.6,336.3L586.2,346.7M586.2,346.7L585.9,357.0M585.9,357.0L585.5,367.3M585.5,367.3L585.1,377.7M585.1,377.7L584.8,388.0M584.8,388.0L584.4,398.3M584.4,398.3L584.0,408.7M584.0,408.7L583.6,419.0M583.6,419.0L583.2,429.3M583.2,429.3L582.9,439.7M582.9,439.7L582.5,450.0M582.5,450.0L582.1,460.3M582.1,460.3L581.8,470.7M581.8,470.7L581.4,481.0M581.4,481.0L581.0,491.3M581.0,491.3L580.6,501.7M580.6,501.7L580.2,512.0M580.2,512.0L579.9,522.3M579.9,522.3L579.5,532.7M579.5,532.7L579.1,543.0M579.1,543.0L578.8,553.3M578.8,553.3L578.4,563.7M578.4,563.7L578.0,574.0" stroke="#ffe000" stroke-width="1" fill="none"/>
<polygon points="527,604 526,596 580,572 583,574 582,578 531,602" fill="#d4a800"/>
<line x1="529" y1="592" x2="580" y2="570" stroke="#f4f4f4" stroke-width="2"/>
<polygon points="527,590 580,567 581,570 528,593" fill="#d4a800"/>
<line x1="588" y1="327" x2="579" y2="574" stroke="#000" stroke-width="2"/>
<line x1="588" y1="330" x2="587" y2="352" stroke="#e03010" stroke-width="2"/>
<polygon points="530,322 538,318 538,346 531,344 527,332" fill="#5a5aff" opacity="0.75"/><polygon points="533,328 538,326 538,340 533,338" fill="#2030e0"/>
<circle cx="522" cy="311" r="1.5" fill="#0a8a2a"/>
<ellipse cx="545.3" cy="334.0" rx="2" ry="3.6" fill="#1838c8" stroke="#000" stroke-width="1" transform="rotate(15 545.3 334.0)"/>
<ellipse cx="563.0" cy="327.5" rx="2" ry="3.6" fill="#1838c8" stroke="#000" stroke-width="1" transform="rotate(15 563.0 327.5)"/>
<ellipse cx="562.0" cy="356.7" rx="2" ry="3.6" fill="#7080e0" stroke="#000" stroke-width="1" transform="rotate(15 562.0 356.7)"/>
<ellipse cx="544.8" cy="363.0" rx="2" ry="3.6" fill="#e8e8f0" stroke="#000" stroke-width="1" transform="rotate(15 544.8 363.0)"/>
<ellipse cx="539.6" cy="531.5" rx="2" ry="3.6" fill="#e8e8f0" stroke="#000" stroke-width="1" transform="rotate(15 539.6 531.5)"/>
<ellipse cx="555.4" cy="527.0" rx="2" ry="3.6" fill="#e8e8f0" stroke="#000" stroke-width="1" transform="rotate(15 555.4 527.0)"/>
<ellipse cx="538.5" cy="561.3" rx="2" ry="3.6" fill="#e8e8f0" stroke="#000" stroke-width="1" transform="rotate(15 538.5 561.3)"/>
<ellipse cx="555.4" cy="554.6" rx="2" ry="3.6" fill="#e8e8f0" stroke="#000" stroke-width="1" transform="rotate(15 555.4 554.6)"/>
<line x1="548" y1="318" x2="583" y2="327" stroke="#90ff40" stroke-width="2"/>
<line x1="563" y1="341" x2="592" y2="346" stroke="#90ff40" stroke-width="2"/>
<polygon points="590,342 602,347 590,352" fill="#90ff40"/>
<line x1="212" y1="349.5" x2="186" y2="345" stroke="#ff0000" stroke-width="3"/>
<polygon points="176,343 188,339 187,350" fill="#ff0000"/>
<path d="M229,337 C212,340 210,362 222,368" stroke="#000" stroke-width="5" fill="none"/>
<path d="M229,337 C212,340 210,362 222,368" stroke="#ff0000" stroke-width="3" fill="none"/>
<polygon points="218,362 230,367 222,372" fill="#ff0000" stroke="#000" stroke-width="0.8"/>
<polygon points="228,376 228,342 225,342 231,331 237,342 233,342 233,376" fill="#ff0000" stroke="#000" stroke-width="0.8"/>
<line x1="932" y1="484" x2="955" y2="487" stroke="#80ff00" stroke-width="3" opacity="0.8"/>
<polygon points="964,488 953,482 954,492" fill="#80ff00"/>
<path d="M911,463 C925,464 928,486 913,494" stroke="#000" stroke-width="5" fill="none"/>
<path d="M911,463 C925,464 928,486 913,494" stroke="#80ff00" stroke-width="3" fill="none"/>
<polygon points="907,455 912,455 912,490 915,490 909,501 903,490 907,490" fill="#80ff00" stroke="#000" stroke-width="0.8"/>
</g>
<rect x="230.9" y="308.1" width="25.8" height="14.6" fill="#969696" opacity="0.6"/><text x="233.5" y="318.8" font-family="Liberation Sans" font-size="10" letter-spacing="0.5" fill="#111">50.0</text>
<rect x="167.0" y="327.0" width="38.9" height="14.6" fill="#969696" opacity="0.6"/><text x="169.6" y="337.7" font-family="Liberation Sans" font-size="10" letter-spacing="0.5" fill="#111">1000.0</text>
<rect x="221.3" y="350.0" width="31.5" height="14.7" fill="#969696" opacity="0.6"/><text x="223.9" y="360.7" font-family="Liberation Sans" font-size="10" letter-spacing="0.5" fill="#111">100.0</text>
<rect x="617.3" y="337.5" width="52.7" height="13.9" fill="#969696" opacity="0.6"/><text x="619.9" y="348.2" font-family="Liberation Sans" font-size="10" letter-spacing="0.5" fill="#111">B8: 212.4</text>
<rect x="909.0" y="434.0" width="28.8" height="14.6" fill="#969696" opacity="0.6"/><text x="911.6" y="444.7" font-family="Liberation Sans" font-size="10" letter-spacing="0.5" fill="#111">-50.0</text>
<rect x="917.0" y="478.0" width="31.8" height="14.5" fill="#969696" opacity="0.6"/><text x="919.6" y="488.7" font-family="Liberation Sans" font-size="10" letter-spacing="0.5" fill="#111">100.0</text>
<rect x="972.0" y="476.2" width="38.7" height="14.7" fill="#969696" opacity="0.6"/><text x="974.6" y="486.9" font-family="Liberation Sans" font-size="10" letter-spacing="0.5" fill="#111">1000.0</text>
<rect x="552.0" y="534.0" width="52.8" height="14.5" fill="#969696" opacity="0.6"/><text x="554.6" y="544.7" font-family="Liberation Sans" font-size="10" letter-spacing="0.5" fill="#111">B11: 55.</text>
<rect x="577.7" y="529.7" width="66.3" height="14.0" fill="#969696" opacity="0.6"/><text x="580.3" y="540.4" font-family="Liberation Sans" font-size="10" letter-spacing="0.5" fill="#111">B12: 107.1</text>
</svg>
<div class="a info" style="left:9px;top:206.3px">Analysis</div>
<div class="a info" style="left:9px;top:227.3px">Plates</div>
<div class="a info" style="left:9px;top:248.3px">Bolts</div>
<div class="a info" style="left:9px;top:269.3px">Welds</div>
<div class="a info" style="left:9px;top:290.3px">Buckling</div>
<svg class="a" style="left:62px;top:202px" width="20" height="84">
<g fill="none" stroke="#6cbd6c" stroke-width="3.4" stroke-linecap="round" stroke-linejoin="round">
<path d="M4,11 L7.5,15.5 L15.5,5"/><path d="M4,32 L7.5,36.5 L15.5,26"/><path d="M4,53 L7.5,57.5 L15.5,47"/><path d="M4,74 L7.5,78.5 L15.5,68"/>
</g></svg>
<div class="a info" style="left:90px;top:206.3px">100.0%</div>
<div class="a info" style="left:90px;top:227.3px">0.9 &lt; 5.0%</div>
<div class="a info" style="left:93px;top:248.3px">93.0 &lt; 100%</div>
<div class="a info" style="left:93px;top:269.3px">98.5 &lt; 100%</div>
<div class="a info" style="left:90px;top:290.3px;font-size:12px;letter-spacing:0">Not calculated</div>
<div class="a" style="left:1022px;top:206.3px;font-size:11.5px;line-height:13px;font-weight:bold;color:#f07020">Production cost</div>
<div class="a info" style="left:1117px;top:206.3px;color:#111">-</div>
<div class="a info" style="left:1127px;top:206.3px;color:#111">25</div>

<div class="a" style="left:555px;top:413px;width:336px;height:115px;background:rgba(0,0,0,0.3);filter:blur(1.5px)"></div>
<div class="a" style="left:552px;top:410px;width:336px;height:115px;background:#f5f5f5;border:1px solid #cfcfcf"></div>
<div class="a" style="left:582px;top:411px;width:1px;height:113px;background:#e0e0e0"></div>
<div class="a m" style="left:591px;top:418.5px;font-weight:bold;color:#111;font-size:12px">PP1</div>
<div class="a m" style="left:591px;top:437.5px">Thickness [mm]</div>
<div class="a m" style="left:757px;top:441px">16.0</div>
<div class="a" style="left:787px;top:435px;width:22px;height:22px;background:#9c9c9c"></div>
<svg class="a" style="left:787px;top:435px" width="22" height="22"><path d="M8,8 L11,4 L14,8Z M8,14 L11,18 L14,14Z" fill="#e8e8e8"/></svg>
<div class="a" style="left:812px;top:435px;width:22px;height:22px;background:#9c9c9c;color:#fff;font-size:11px;text-align:center;line-height:24px">...</div>
<div class="a" style="left:556px;top:457px;width:328px;height:22px;background:#c3dfee;border:1px solid #3f9fdc"></div>
<div class="a m" style="left:591px;top:462px">Editor...</div>
<div class="a" style="left:580px;top:453px;width:78px;height:31.5px;border:3.5px solid #e8141b;border-radius:7px"></div>
<div class="a m" style="left:591px;top:484.5px">Create section</div>
<div class="a m" style="left:591px;top:506.5px;color:#8a8a8a">Delete section</div>

</body></html>
